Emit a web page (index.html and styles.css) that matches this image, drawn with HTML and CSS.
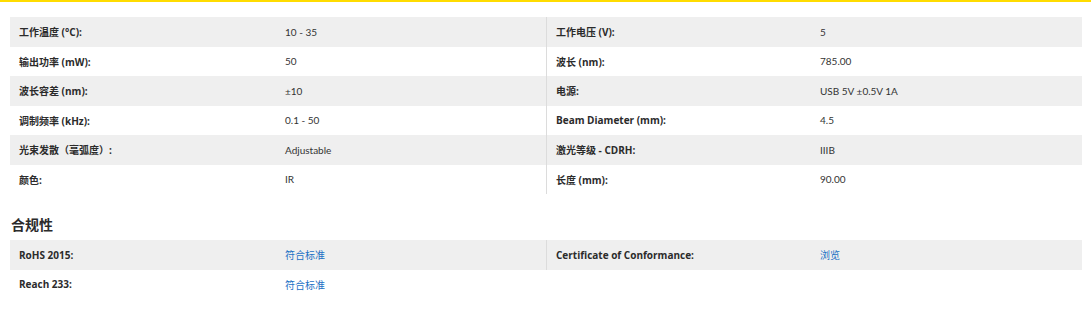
FILE: index.html
```html
<!DOCTYPE html>
<html lang="zh">
<head>
<meta charset="utf-8">
<title>规格</title>
<link rel="stylesheet" href="styles.css">
</head>
<body>
<div class="topbar"></div>
<div class="page">
  <div class="specs">
    <div class="panel panel-left">
      <div class="row shade"><div class="label">工作温度 (°C):</div><div class="value">10 - 35</div></div>
      <div class="row"><div class="label">输出功率 (mW):</div><div class="value">50</div></div>
      <div class="row shade"><div class="label">波长容差 (nm):</div><div class="value">±10</div></div>
      <div class="row"><div class="label">调制频率 (kHz):</div><div class="value">0.1 - 50</div></div>
      <div class="row shade"><div class="label">光束发散（毫弧度）:</div><div class="value">Adjustable</div></div>
      <div class="row"><div class="label">颜色:</div><div class="value">IR</div></div>
    </div>
    <div class="panel panel-right">
      <div class="row shade"><div class="label">工作电压 (V):</div><div class="value">5</div></div>
      <div class="row"><div class="label">波长 (nm):</div><div class="value">785.00</div></div>
      <div class="row shade"><div class="label">电源:</div><div class="value">USB 5V ±0.5V 1A</div></div>
      <div class="row"><div class="label">Beam Diameter (mm):</div><div class="value">4.5</div></div>
      <div class="row shade"><div class="label">激光等级 - CDRH:</div><div class="value">IIIB</div></div>
      <div class="row"><div class="label">长度 (mm):</div><div class="value">90.00</div></div>
    </div>
  </div>

  <h2 class="section-title">合规性</h2>

  <div class="specs">
    <div class="panel panel-left">
      <div class="row shade"><div class="label">RoHS 2015:</div><div class="value"><a class="link" href="#">符合标准</a></div></div>
      <div class="row"><div class="label">Reach 233:</div><div class="value"><a class="link" href="#">符合标准</a></div></div>
    </div>
    <div class="panel panel-right panel-short">
      <div class="row shade"><div class="label">Certificate of Conformance:</div><div class="value"><a class="link" href="#">浏览</a></div></div>
    </div>
  </div>
</div>
</body>
</html>
```
FILE: styles.css
```css
html, body {
  margin: 0;
  padding: 0;
  background: #ffffff;
}

body {
  font-family: "Lato", "Noto Sans CJK SC", sans-serif;
  font-size: 10px;
  color: #333333;
}

.topbar {
  height: 2px;
  background: #ffdc00;
}

.page {
  padding: 15px 9px 0 10px;
}

.specs {
  display: flex;
}

.panel {
  display: flex;
  flex-direction: column;
}

.panel-left {
  width: 536px;
}

.panel-right {
  flex: 1;
  border-left: 1px solid #dcdcdc;
}

.panel-short {
  align-self: flex-start;
}

.row {
  display: grid;
  height: 29.5px;
  align-items: center;
}

.panel-left .row {
  grid-template-columns: 266px 1fr;
}

.panel-right .row {
  grid-template-columns: 264px 1fr;
}

.shade {
  background: #efefef;
}

.label {
  padding-left: 9px;
  font-family: "Open Sans", "Noto Sans CJK SC", sans-serif;
  font-weight: bold;
  color: #2b2b2b;
}

.value {
  padding-left: 9px;
  color: #333333;
}

.link {
  color: #1a6fc4;
  text-decoration: none;
}

.section-title {
  margin: 20px 0 4px 1px;
  font-size: 14px;
  line-height: 22px;
  font-weight: bold;
  color: #2b2b2b;
}
```
